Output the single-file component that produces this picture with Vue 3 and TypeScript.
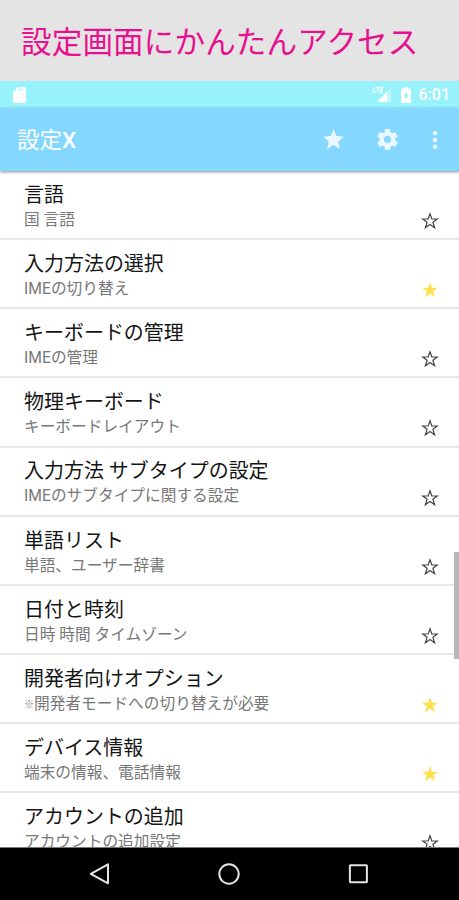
<script setup lang="ts">
interface SettingItem {
  title: string
  detail: string
  favorite: boolean
  note?: boolean
}

const items: SettingItem[] = [
  { title: '言語', detail: '国 言語', favorite: false },
  { title: '入力方法の選択', detail: 'IMEの切り替え', favorite: true },
  { title: 'キーボードの管理', detail: 'IMEの管理', favorite: false },
  { title: '物理キーボード', detail: 'キーボードレイアウト', favorite: false },
  { title: '入力方法 サブタイプの設定', detail: 'IMEのサブタイプに関する設定', favorite: false },
  { title: '単語リスト', detail: '単語、ユーザー辞書', favorite: false },
  { title: '日付と時刻', detail: '日時 時間 タイムゾーン', favorite: false },
  { title: '開発者向けオプション', detail: '開発者モードへの切り替えが必要', favorite: true, note: true },
  { title: 'デバイス情報', detail: '端末の情報、電話情報', favorite: true },
  { title: 'アカウントの追加', detail: 'アカウントの追加設定', favorite: false },
]

const starPath =
  'M12 17.27L18.18 21l-1.64-7.03L22 9.24l-7.19-.61L12 2 9.19 8.63 2 9.24l5.46 4.73L5.82 21z'
</script>

<template>
  <div class="screen">
    <h1 class="banner">設定画面にかんたんアクセス</h1>

    <div class="status">
      <svg class="sd" viewBox="0 0 13 16"><path d="M5 0h6.500Q13 0 13 1.500v13Q13 16 11.500 16h-10Q0 16 0 14.500V5z" /><path class="notch" d="M4.500 3.500 6.500 1.800h4v1.700z" /></svg>
      <span class="grow"></span>
      <svg class="signal" viewBox="0 0 20 17">
        <path d="M5 16 15 6v10z" />
        <path class="faint" d="M15 6l4-4v14h-4z" />
        <path class="net" d="M1.500 1.500v5H4M3.500 1.500h4M5.700 1.500v5M11 1.500H8.500v5H11M8.500 4H11" />
      </svg>
      <svg class="battery" viewBox="0 0 10 16"><path d="M3 0h4v1.500h2q1 0 1 1V15q0 1-1 1H1q-1 0-1-1V2.500q0-1 1-1h2z" /><path class="bolt" d="M5.800 4 2.500 9.500h2V13l3.200-5.400h-2z" /></svg>
      <span class="clock">6:01</span>
    </div>

    <header class="toolbar">
      <span class="app-name">設定<b>X</b></span>
      <svg class="action" viewBox="0 0 24 24"><path :d="starPath" /></svg>
      <svg class="action gear" viewBox="0 0 24 24">
        <path d="M19.430 12.980c.04-.32.07-.64.07-.98s-.03-.66-.07-.98l2.110-1.650c.19-.15.24-.42.12-.64l-2-3.460c-.12-.22-.39-.3-.61-.22l-2.490 1c-.52-.4-1.080-.73-1.690-.98l-.38-2.650C14.460 2.180 14.250 2 14 2h-4c-.25 0-.46.18-.49.42l-.38 2.650c-.61.25-1.170.59-1.690.98l-2.490-1c-.23-.09-.49 0-.61.22l-2 3.460c-.13.22-.07.49.12.64l2.110 1.650c-.04.32-.07.65-.07.98s.03.66.07.98l-2.110 1.650c-.19.15-.24.42-.12.64l2 3.460c.12.22.39.3.61.22l2.490-1c.52.4 1.080.73 1.690.98l.38 2.650c.03.24.24.42.49.42h4c.25 0 .46-.18.49-.42l.38-2.650c.61-.25 1.170-.59 1.690-.98l2.490 1c.23.09.49 0 .61-.22l2-3.460c.12-.22.07-.49-.12-.64l-2.110-1.650zM12 15.500c-1.930 0-3.500-1.570-3.500-3.500s1.570-3.500 3.500-3.500 3.500 1.570 3.500 3.500-1.570 3.500-3.500 3.500z" />
      </svg>
      <svg class="more" viewBox="0 0 6 20"><circle cx="3" cy="3.200" r="2.300" /><circle cx="3" cy="10" r="2.300" /><circle cx="3" cy="16.800" r="2.300" /></svg>
    </header>

    <main class="list">
      <div v-for="item in items" :key="item.title" class="row">
        <div class="texts">
          <div class="title">{{ item.title }}</div>
          <div class="detail"><span v-if="item.note" class="mark">※</span>{{ item.detail }}</div>
        </div>
        <svg class="star" :class="{ on: item.favorite }" viewBox="0 0 18 18">
          <path d="M9 1.800 10.800 7H16.300L11.900 10.300 13.600 15.700 9 12.500 4.400 15.700 6.100 10.300 1.700 7H7.200z" />
        </svg>
      </div>
      <div class="scrollbar"></div>
    </main>

    <nav class="navbar">
      <svg viewBox="0 0 24 24"><path d="M21 2.300v19L3.800 11.800z" /></svg>
      <svg viewBox="0 0 24 24"><circle cx="12" cy="12" r="9.700" /></svg>
      <svg viewBox="0 0 24 24"><rect x="3.900" y="3.200" width="17" height="17" rx=".6" /></svg>
    </nav>
  </div>
</template>

<style>
body {
  margin: 0;
  overflow: hidden;
}
</style>

<style scoped>
.screen {
  display: flex;
  flex-direction: column;
  width: 459px;
  height: 900px;
  overflow: hidden;
  background: #fff;
  font-family: Roboto, 'Noto Sans CJK JP', sans-serif;
}
svg {
  display: block;
  flex: none;
}
.banner {
  box-sizing: border-box;
  flex: none;
  height: 81px;
  margin: 0;
  padding-left: 21px;
  background: #e4e4e4;
  color: #e7118f;
  font-family: 'Noto Sans CJK JP', sans-serif;
  font-size: 30.600px;
  font-weight: 400;
  line-height: 80px;
  letter-spacing: 0.1px;
  white-space: nowrap;
}
.status {
  display: flex;
  flex: none;
  align-items: center;
  box-sizing: border-box;
  height: 27px;
  padding: 0 9px 0 12.500px;
  background: #98f2fc;
  color: #fff;
  fill: #fff;
}
.sd {
  width: 13px;
  height: 16px;
}
.notch {
  fill: #98f2fc;
  opacity: 0.7;
}
.grow {
  flex: 1;
}
.signal {
  width: 20px;
  height: 17px;
  margin-right: 9px;
}
.faint {
  opacity: 0.4;
}
.net {
  fill: none;
  stroke: #fff;
  stroke-width: 1.400;
  opacity: 0.8;
}
.battery {
  width: 10px;
  height: 16px;
  margin-right: 8px;
}
.bolt {
  fill: #98f2fc;
}
.clock {
  font-size: 16px;
  font-weight: 500;
  line-height: 27px;
}
.toolbar {
  position: relative;
  z-index: 1;
  display: flex;
  flex: none;
  align-items: center;
  box-sizing: border-box;
  height: 63px;
  padding: 0 21px 0 17px;
  background: #84d7ff;
  box-shadow: 0 1px 3px rgba(0, 0, 0, 0.45);
  color: #fff;
}
.app-name {
  flex: 1;
  font-size: 22.500px;
  font-weight: 400;
  line-height: 62px;
}
.app-name b {
  font-weight: 500;
}
.action {
  width: 25px;
  height: 25px;
  margin-right: 29px;
  fill: #eaf8ff;
}
.gear {
  margin-right: 32.500px;
}
.more {
  width: 6px;
  height: 20px;
  fill: #eaf8ff;
}
.list {
  position: relative;
  flex: 1;
  min-height: 0;
  overflow: hidden;
}
.row {
  display: flex;
  justify-content: space-between;
  box-sizing: border-box;
  height: 69.150px;
  padding: 9.800px 20px 0 24px;
  border-bottom: 2px solid #e7e7e7;
}
.title {
  color: #151515;
  font-size: 19.980px;
  line-height: 28px;
  white-space: nowrap;
}
.detail {
  color: #777;
  font-size: 15.700px;
  line-height: 21px;
  white-space: nowrap;
}
.mark {
  display: inline-block;
  width: 10px;
  font-size: 10px;
  vertical-align: 1px;
}
.star {
  width: 18px;
  height: 18px;
  margin-top: 31.200px;
  fill: none;
  stroke: #444;
  stroke-width: 1.200;
}
.star.on {
  fill: #fce14f;
  stroke: #fce14f;
  stroke-width: 0.500;
}
.scrollbar {
  position: absolute;
  top: 381px;
  right: 0;
  width: 5px;
  height: 107px;
  background: #b5b5b5;
}
.navbar {
  display: flex;
  flex: none;
  align-items: center;
  justify-content: center;
  gap: 105.500px;
  box-sizing: border-box;
  height: 53px;
  padding-right: 2px;
  border-top: 1px solid #777;
  background: #000;
}
.navbar svg {
  width: 24px;
  height: 24px;
  fill: none;
  stroke: #e4e4e4;
  stroke-width: 2;
  stroke-linejoin: round;
}
</style>
